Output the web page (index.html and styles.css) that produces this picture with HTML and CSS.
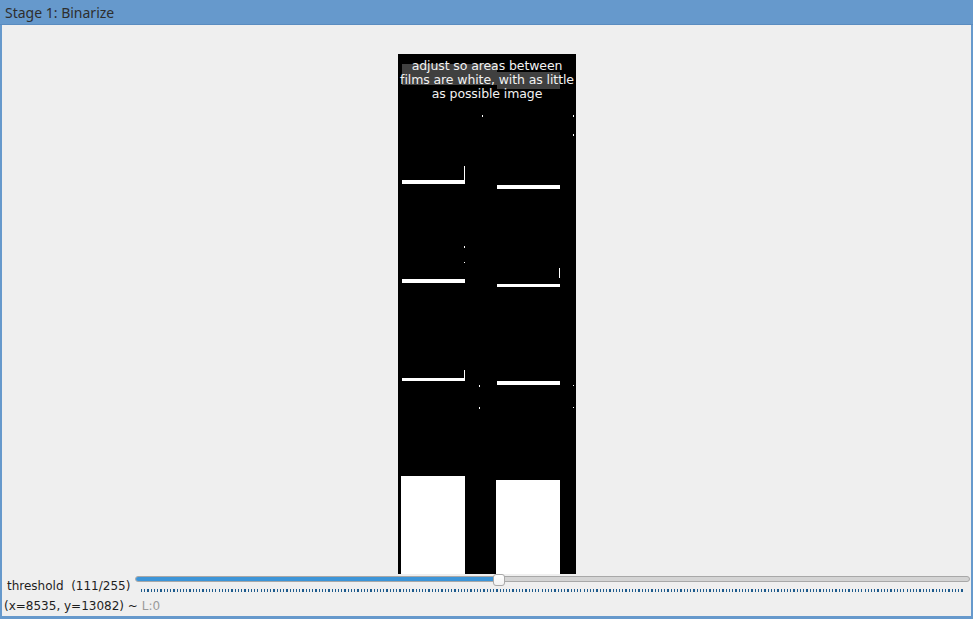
FILE: index.html
```html
<!DOCTYPE html>
<html>
<head>
<meta charset="utf-8">
<link rel="stylesheet" href="styles.css">
</head>
<body>
<div class="window">
  <div class="titlebar">Stage 1: Binarize</div>
  <div class="client">
    <div class="view">
      <div class="image">
        <span class="hl hl1"></span>
        <span class="hl hl2"></span>
        <div class="caption">adjust so areas between<br>films are white, with as little<br>as possible image</div>
        <span class="w" style="left:4px;top:126px;width:63px;height:4px"></span>
        <span class="w" style="left:99px;top:131px;width:63px;height:4px"></span>
        <span class="w" style="left:4px;top:225px;width:63px;height:4px"></span>
        <span class="w" style="left:99px;top:230px;width:63px;height:3px"></span>
        <span class="w" style="left:4px;top:324px;width:63px;height:3px"></span>
        <span class="w" style="left:99px;top:327px;width:63px;height:4px"></span>
        <span class="w" style="left:3px;top:422px;width:64px;height:98px"></span>
        <span class="w" style="left:98px;top:426px;width:64px;height:94px"></span>
        <span class="w" style="left:66px;top:112px;width:1px;height:14px"></span>
        <span class="w" style="left:161px;top:214px;width:1px;height:10px"></span>
        <span class="w" style="left:66px;top:316px;width:1px;height:8px"></span>
        <span class="w" style="left:84px;top:61px;width:1px;height:2px"></span>
        <span class="w" style="left:175px;top:61px;width:1px;height:2px"></span>
        <span class="w" style="left:66px;top:192px;width:1px;height:2px"></span>
        <span class="w" style="left:66px;top:208px;width:1px;height:1px"></span>
        <span class="w" style="left:81px;top:331px;width:1px;height:2px"></span>
        <span class="w" style="left:81px;top:353px;width:1px;height:2px"></span>
        <span class="w" style="left:175px;top:331px;width:1px;height:1px"></span>
        <span class="w" style="left:175px;top:353px;width:1px;height:1px"></span>
        <span class="w" style="left:175px;top:80px;width:1px;height:2px"></span>
      </div>
    </div>
    <div class="slider-row">
      <span class="label">threshold&nbsp; (111/255)</span>
      <div class="slider">
        <div class="track"><div class="fill" style="width:43.3%"></div></div>
        <div class="handle" style="left:42.9%"></div>
        <div class="ticks"></div>
      </div>
    </div>
    <div class="status">(x=8535, y=13082) ~ <span class="dim">L:0</span></div>
  </div>
</div>
</body>
</html>
```
FILE: styles.css
```css
html, body {
  margin: 0;
  padding: 0;
  background: #efefef;
}
.window {
  width: 973px;
  height: 619px;
  display: flex;
  flex-direction: column;
  font-family: "DejaVu Sans", sans-serif;
}
.titlebar {
  height: 25px;
  background: #6699cc;
  color: #2e2e2e;
  font-family: "Noto Sans", sans-serif;
  font-size: 14px;
  line-height: 25px;
  padding-left: 5px;
  box-sizing: border-box;
  border-bottom: 1px solid #5a8cc0;
}
.client {
  flex: 1;
  display: flex;
  flex-direction: column;
  border-left: 2px solid #6699cc;
  border-right: 2px solid #6699cc;
  border-bottom: 3px solid #6699cc;
  background: #efefef;
  min-height: 0;
}
.view {
  height: 548px;
  display: flex;
  justify-content: center;
  padding-top: 29px;
  padding-left: 1px;
  box-sizing: border-box;
}
.image {
  position: relative;
  width: 178px;
  height: 520px;
  background: #000;
  overflow: hidden;
}
.caption {
  position: relative;
  margin-top: 5px;
  text-align: center;
  color: #f2f2f2;
  font-size: 12.5px;
  line-height: 14px;
  letter-spacing: -0.1px;
}
.hl {
  position: absolute;
  background: #404040;
}
.hl1 { left: 4px; top: 10px; width: 95px; height: 21px; }
.hl2 { left: 99px; top: 18px; width: 63px; height: 17px; }
.w {
  position: absolute;
  background: #fff;
}
.slider-row {
  height: 23px;
  display: flex;
  align-items: flex-start;
}
.label {
  font-size: 12px;
  color: #1e1e1e;
  padding-left: 5px;
  padding-top: 6px;
  width: 128px;
  white-space: nowrap;
}
.slider {
  position: relative;
  flex: 1;
  margin-right: 1px;
  height: 23px;
}
.track {
  position: absolute;
  left: 0;
  right: 0;
  top: 3px;
  height: 6px;
  box-sizing: border-box;
  border: 1px solid #a8a8a8;
  border-radius: 3px;
  background: #d4d4d4;
  overflow: hidden;
}
.fill {
  height: 100%;
  background: #3d95d8;
}
.handle {
  position: absolute;
  top: 1px;
  width: 12px;
  height: 12px;
  box-sizing: border-box;
  background: linear-gradient(#ffffff, #f2f2f2);
  border: 1px solid #a9a9a9;
  border-radius: 3px;
}
.ticks {
  position: absolute;
  left: 6px;
  right: 6px;
  top: 16px;
  height: 3px;
  background: repeating-linear-gradient(90deg, #1d5a8c 0 1.2px, transparent 1.2px 3.23px);
}
.status {
  font-size: 12px;
  color: #1e1e1e;
  padding-left: 2px;
  padding-top: 2px;
  line-height: 17px;
}
.dim { color: #9a9a9a; }
```
